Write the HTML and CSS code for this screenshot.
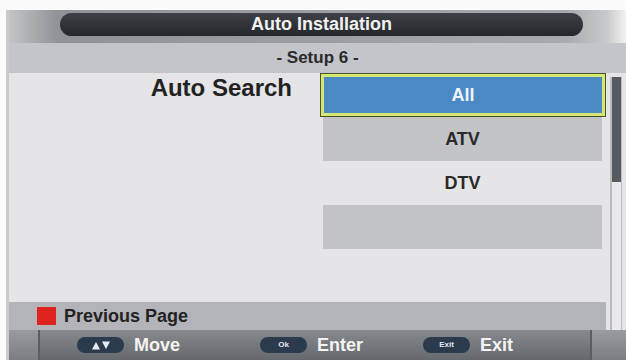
FILE: index.html
```html
<!DOCTYPE html>
<html lang="en">
<head>
    <meta charset="UTF-8">
    <title>Auto Installation</title>
    <link rel="stylesheet" href="styles.css">
</head>
<body>
    <div class="frame">
        <div class="title-band">
            <div class="title-pill">Auto Installation</div>
        </div>
        <div class="subtitle">- Setup 6 -</div>

        <div class="middle">
            <div class="main">
                <div class="content">
                    <div class="label">Auto Search</div>
                    <div class="list">
                        <div class="item selected">All</div>
                        <div class="item dark">ATV</div>
                        <div class="item">DTV</div>
                        <div class="item dark"></div>
                    </div>
                </div>
                <div class="prev">
                    <span class="red-key"></span>
                    <span>Previous Page</span>
                </div>
            </div>
            <div class="scroll-col">
                <div class="scrollbar">
                    <div class="thumb"></div>
                </div>
            </div>
        </div>

        <div class="footer">
            <div class="foot-side"></div>
            <div class="foot-keys">
                <div class="key">
                    <span class="pill">
                        <svg width="20" height="9" viewBox="0 0 20 9">
                            <path d="M1 8.5 L5 1 L9 8.5 Z" fill="#e8ecf2"/>
                            <path d="M11 0.5 L19 0.5 L15 8 Z" fill="#e8ecf2"/>
                        </svg>
                    </span>Move
                </div>
                <div class="key"><span class="pill">Ok</span>Enter</div>
                <div class="key"><span class="pill">Exit</span>Exit</div>
            </div>
            <div class="foot-side right"></div>
        </div>
    </div>
</body>
</html>
```

FILE: styles.css
```css
* {
    margin: 0;
    padding: 0;
    box-sizing: border-box;
}

body {
    width: 626px;
    height: 360px;
    overflow: hidden;
    background: #fbfbfb;
    font-family: 'Liberation Sans', Arial, sans-serif;
    font-weight: bold;
}

.frame {
    margin: 10px 0 0 6px;
    width: 620px;
    height: 350px;
    border-left: 3px solid #c9cacd;
    display: flex;
    flex-direction: column;
}

/* Title */
.title-band {
    height: 33px;
    background: linear-gradient(to right, #c3c4c7 0%, #8f9296 8%, #9a9da1 50%, #a6a9ad 90%, #c9cacd 97%, #f2f2f2 100%);
    padding: 3px 0 0 51px;
}

.title-pill {
    width: 523px;
    height: 23px;
    border-radius: 12px;
    background: linear-gradient(to bottom, #3d4146, #24282c);
    color: #f2f2f2;
    font-size: 18px;
    text-align: center;
    line-height: 23px;
}

.subtitle {
    height: 30px;
    background: #c3c5ca;
    color: #2a2a2a;
    font-size: 17px;
    text-align: center;
    line-height: 30px;
}

/* Middle */
.middle {
    display: flex;
    height: 257px;
}

.main {
    width: 597px;
    display: flex;
    flex-direction: column;
}

.content {
    height: 229px;
    background: #e5e5e7;
    display: flex;
}

.label {
    width: 311px;
    padding: 1px 28px 0 0;
    text-align: right;
    font-size: 24px;
    color: #222;
}

.list {
    width: 286px;
}

.item {
    height: 44px;
    margin: 0 4px 0 3px;
    text-align: center;
    line-height: 44px;
    font-size: 18px;
    color: #2a2a2a;
}

.item.dark {
    background: #c3c4c7;
}

.item.selected {
    margin: 0;
    background: #4b89c4;
    border: 4px solid #d6e774;
    outline: 1px solid #4e5228;
    outline-offset: -1px;
    color: #eef4fa;
    line-height: 36px;
}

.prev {
    height: 28px;
    background: #b2b4b9;
    display: flex;
    align-items: center;
    gap: 8px;
    padding-left: 28px;
    font-size: 18px;
    color: #222;
}

.red-key {
    width: 19px;
    height: 18px;
    background: #e0231f;
}

.scroll-col {
    flex: 1;
    background: #e5e5e7;
    padding: 4px 0 0 4px;
}

.scrollbar {
    width: 12px;
    height: 253px;
    background: #e9e9eb;
    border-left: 2px solid #b9bbbf;
    border-right: 1px solid #b9bbbf;
}

.thumb {
    height: 105px;
    background: #56595d;
}

/* Footer */
.footer {
    height: 30px;
    display: flex;
    background: linear-gradient(to bottom, #86898d, #65686c);
}

.foot-side {
    width: 31px;
    border-right: 2px solid #5a5d61;
    background: linear-gradient(to bottom, #989b9f, #7a7d81);
}

.foot-side.right {
    width: 36px;
    border-right: none;
    border-left: 2px solid #5a5d61;
}

.foot-keys {
    flex: 1;
    display: flex;
    align-items: center;
    padding-left: 37px;
    color: #f4f4f4;
    font-size: 18px;
}

.key {
    display: flex;
    align-items: center;
    gap: 10px;
    width: 183px;
}

.key + .key {
    width: 163px;
}

.pill {
    width: 47px;
    height: 16px;
    border-radius: 8px;
    background: #2c3a4e;
    font-size: 8px;
    line-height: 16px;
    text-align: center;
    color: #e4e8ee;
    display: flex;
    align-items: center;
    justify-content: center;
}
```
